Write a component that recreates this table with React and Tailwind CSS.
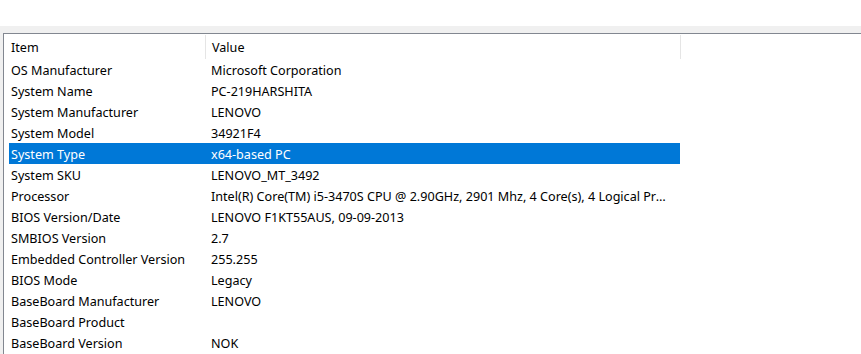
import React, { useState } from "react";

const rows = [
  ["OS Manufacturer", "Microsoft Corporation"],
  ["System Name", "PC-219HARSHITA"],
  ["System Manufacturer", "LENOVO"],
  ["System Model", "34921F4"],
  ["System Type", "x64-based PC"],
  ["System SKU", "LENOVO_MT_3492"],
  ["Processor", "Intel(R) Core(TM) i5-3470S CPU @ 2.90GHz, 2901 Mhz, 4 Core(s), 4 Logical Processor(s)"],
  ["BIOS Version/Date", "LENOVO F1KT55AUS, 09-09-2013"],
  ["SMBIOS Version", "2.7"],
  ["Embedded Controller Version", "255.255"],
  ["BIOS Mode", "Legacy"],
  ["BaseBoard Manufacturer", "LENOVO"],
  ["BaseBoard Product", ""],
  ["BaseBoard Version", "NOK"],
];

const SystemSummary = () => {
  const [selected, setSelected] = useState(4);

  return (
    <div className="h-[354px] overflow-hidden bg-white font-['Noto_Sans',sans-serif] text-[12.6px] text-black">
      <div className="h-[26px] bg-white" />
      <div className="h-full bg-[#f0f0f0] pl-[3px] pt-[7px]">
        <div className="h-full border-l border-t border-[#828790] bg-white">
          {/* column headers */}
          <div className="flex h-[25px] items-center">
            <div className="flex h-full w-[201px] items-center pl-[7px] pt-[4px]">Item</div>
            <div className="mt-px h-[24px] w-px self-start bg-[#e5e5e5]" />
            <div className="flex h-full w-[474px] items-center pl-[6px] pt-[4px]">Value</div>
            <div className="mt-px h-[24px] w-px self-start bg-[#e5e5e5]" />
          </div>

          {/* item list */}
          <div className="pl-[5px]">
            {rows.map(([item, value], i) => (
              <div
                key={i}
                onClick={() => setSelected(i)}
                className={
                  "flex h-[21px] w-[671px] items-center pt-[4px] " +
                  (selected === i ? "bg-[#0078d7] text-white" : "")
                }
              >
                <div className="w-[196px] shrink-0 truncate pl-[2px]">{item}</div>
                <div className="min-w-0 flex-1 truncate pl-[6px] pr-[10px]">{value}</div>
              </div>
            ))}
          </div>
        </div>
      </div>
    </div>
  );
};

export default function App() {
  return <SystemSummary />;
}
